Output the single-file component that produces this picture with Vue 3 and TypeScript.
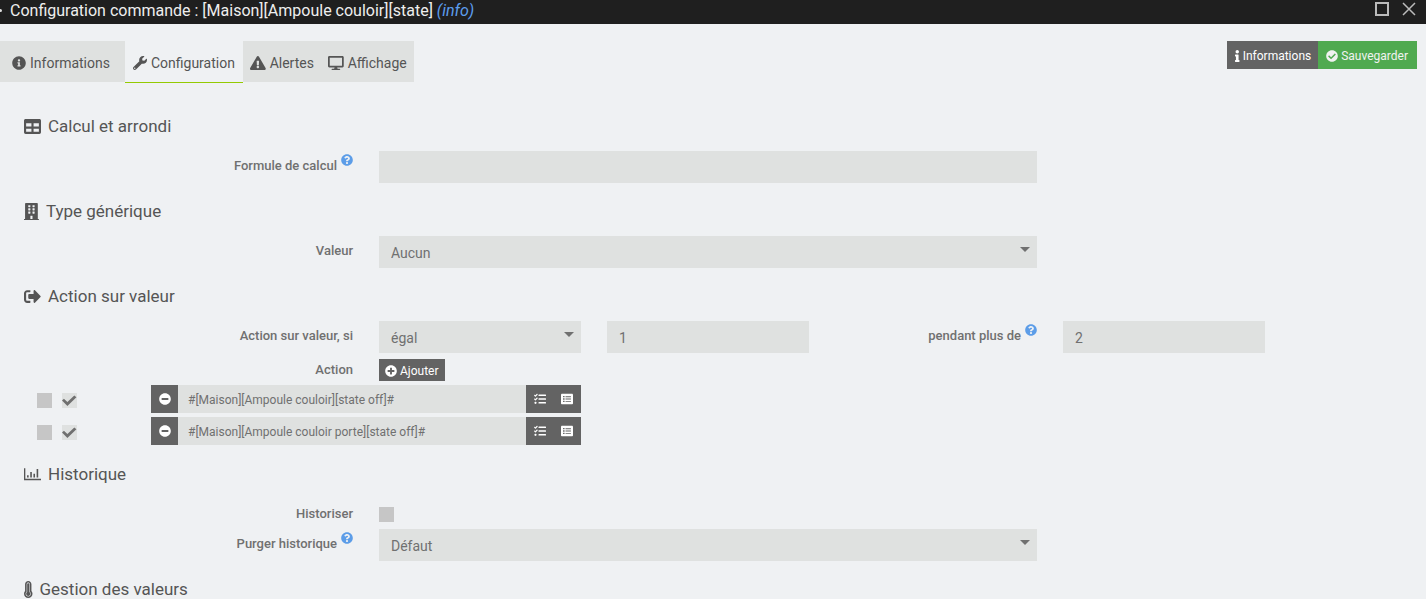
<script setup lang="ts">
import { ref } from 'vue'

interface Icon {
  w: number
  d: string
}

const icons: Record<string, Icon> = {
  info: {
    w: 512,
    d: 'M256 8C119 8 8 119 8 256s111 248 248 248 248-111 248-248S393 8 256 8zm0 110c23 0 42 19 42 42s-19 42-42 42-42-19-42-42 19-42 42-42zm56 254c0 7-5 12-12 12h-88c-7 0-12-5-12-12v-24c0-7 5-12 12-12h12v-64h-12c-7 0-12-5-12-12v-24c0-7 5-12 12-12h64c7 0 12 5 12 12v100h12c7 0 12 5 12 12z',
  },
  wrench: {
    w: 512,
    d: 'M507.7 109.1c-2.2-9-13.5-12.1-20.1-5.5l-74.4 74.4-67.9-11.3L334 98.9l74.4-74.4c6.6-6.6 3.4-17.9-5.7-20.2-47.4-11.7-99.6.9-136.6 37.9-39.6 39.6-50.5 97.1-34.1 147.2L18.7 402.8c-25 25-25 65.5 0 90.5s65.5 25 90.5 0l213.2-213.2c50.1 16.7 107.5 5.7 147.4-34.2 37.1-37.1 49.7-89.3 37.9-136.8zM64 472c-13.2 0-24-10.8-24-24s10.8-24 24-24 24 10.8 24 24-10.7 24-24 24z',
  },
  warning: {
    w: 576,
    d: 'M569.5 440C588 472 564.8 512 527.9 512H48.1c-36.9 0-60-40.1-41.6-72L246.4 24c18.5-32 64.7-32 83.2 0l239.9 416zM288 354c-25.4 0-46 20.6-46 46s20.6 46 46 46 46-20.6 46-46-20.6-46-46-46zm-43.7-165.3l7.4 136c.4 6.4 5.6 11.3 12 11.3h48.6c6.4 0 11.6-4.9 12-11.3l7.4-136c.4-6.9-5.1-12.7-12-12.7h-63.4c-6.9 0-12.4 5.8-12 12.7z',
  },
  desktop: {
    w: 576,
    d: 'M528 0H48C21.5 0 0 21.5 0 48v320c0 26.500 21.500 48 48 48h192l-16 48h-72c-13.300 0-24 10.700-24 24s10.700 24 24 24h272c13.300 0 24-10.700 24-24s-10.700-24-24-24h-72l-16-48h192c26.500 0 48-21.500 48-48V48c0-26.500-21.500-48-48-48zm-16 352H64V64h448v288z',
  },
  infoBare: {
    w: 192,
    d: 'M20 424.200h20V279.800H20c-11 0-20-9-20-20V212c0-11 9-20 20-20h112c11 0 20 9 20 20v212.200h20c11 0 20 9 20 20V492c0 11-9 20-20 20H20c-11 0-20-9-20-20v-47.800c0-11 9-20 20-20zM96 0C56.200 0 24 32.200 24 72s32.200 72 72 72 72-32.200 72-72S135.800 0 96 0z',
  },
  checkCircle: {
    w: 512,
    d: 'M504 256c0 137-111 248-248 248S8 393 8 256 119 8 256 8s248 111 248 248zM227.300 387.300l184-184c6.200-6.200 6.200-16.400 0-22.600l-22.600-22.600c-6.200-6.200-16.400-6.200-22.600 0L216 308.100l-70.100-70.100c-6.200-6.200-16.400-6.200-22.600 0l-22.600 22.600c-6.200 6.200-6.200 16.400 0 22.600l104 104c6.200 6.300 16.400 6.300 22.600.1z',
  },
  table: {
    w: 512,
    d: 'M464 32H48C21.500 32 0 53.500 0 80v352c0 26.500 21.500 48 48 48h416c26.500 0 48-21.500 48-48V80c0-26.500-21.500-48-48-48zM224 416H64v-96h160v96zm0-160H64v-96h160v96zm224 160H288v-96h160v96zm0-160H288v-96h160v96z',
  },
  building: {
    w: 448,
    d: 'M436 480h-20V24c0-13.300-10.700-24-24-24H56C42.700 0 32 10.700 32 24v456H12c-6.600 0-12 5.400-12 12v20h448v-20c0-6.600-5.400-12-12-12zM128 76c0-6.600 5.400-12 12-12h40c6.600 0 12 5.400 12 12v40c0 6.600-5.400 12-12 12h-40c-6.600 0-12-5.400-12-12V76zm0 96c0-6.600 5.400-12 12-12h40c6.600 0 12 5.400 12 12v40c0 6.600-5.400 12-12 12h-40c-6.600 0-12-5.400-12-12v-40zm52 148h-40c-6.600 0-12-5.400-12-12v-40c0-6.600 5.400-12 12-12h40c6.600 0 12 5.400 12 12v40c0 6.600-5.400 12-12 12zm76 160h-64v-84c0-6.600 5.400-12 12-12h40c6.600 0 12 5.400 12 12v84zm64-172c0 6.600-5.400 12-12 12h-40c-6.600 0-12-5.400-12-12v-40c0-6.600 5.400-12 12-12h40c6.600 0 12 5.400 12 12v40zm0-96c0 6.600-5.400 12-12 12h-40c-6.600 0-12-5.400-12-12v-40c0-6.600 5.400-12 12-12h40c6.600 0 12 5.400 12 12v40zm0-96c0 6.600-5.400 12-12 12h-40c-6.600 0-12-5.400-12-12V76c0-6.600 5.400-12 12-12h40c6.600 0 12 5.400 12 12v40z',
  },
  signOut: {
    w: 512,
    d: 'M497 273L329 441c-15 15-41 4.500-41-17v-96H152c-13.300 0-24-10.700-24-24v-96c0-13.300 10.700-24 24-24h136V88c0-21.400 25.900-32 41-17l168 168c9.300 9.400 9.300 24.600 0 34zM192 436v-40c0-6.600-5.400-12-12-12H96c-17.700 0-32-14.300-32-32V160c0-17.700 14.300-32 32-32h84c6.600 0 12-5.400 12-12V76c0-6.600-5.400-12-12-12H96c-53 0-96 43-96 96v192c0 53 43 96 96 96h84c6.600 0 12-5.400 12-12z',
  },
  chart: {
    w: 512,
    d: 'M0 64h40v320h472v44H0zM92 280h48v64h-48zM188 184h48v160h-48zM284 232h48v112h-48zM380 88h48v256h-48z',
  },
  thermometer: {
    w: 256,
    d: 'M224 96c0-53-43-96-96-96S32 43 32 96v203.300C12.300 321.500 0 350.700 0 383c0 70.700 57.300 129 128 129s128-57.300 128-128c0-32.500-12.300-62.300-32-84.700zm-96 368c-44.100 0-80-35.900-80-80 0-25.500 12.200-48.900 32-63.800V96c0-26.500 21.500-48 48-48s48 21.500 48 48v224.200c19.800 14.800 32 38.300 32 63.800 0 44.100-35.900 80-80 80zm64-80c0 35.300-28.700 64-64 64s-64-28.700-64-64c0-23.700 12.900-44.400 32-55.400V96c0-17.700 14.300-32 32-32s32 14.300 32 32v232.600c19.100 11 32 31.700 32 55.400z',
  },
  question: {
    w: 512,
    d: 'M504 256c0 137-111 248-248 248S8 393 8 256 119 8 256 8s248 111 248 248zM262.700 90c-54.500 0-89.300 23-116.500 63.800-3.500 5.300-2.400 12.400 2.700 16.300l34.700 26.300c5.200 3.900 12.600 3 16.700-2.100 17.900-22.700 30.100-35.800 57.300-35.800 20.400 0 45.700 13.100 45.700 33 0 15-12.400 22.700-32.500 34C247.100 238.500 216 254.900 216 296v4c0 6.600 5.400 12 12 12h56c6.600 0 12-5.400 12-12v-1.300c0-28.500 83.200-29.600 83.200-106.700 0-58-60.200-102-116.500-102zM256 338c-25.400 0-46 20.600-46 46s20.600 46 46 46 46-20.600 46-46-20.600-46-46-46z',
  },
  plus: {
    w: 512,
    d: 'M256 8C119 8 8 119 8 256s111 248 248 248 248-111 248-248S393 8 256 8zm144 276c0 6.600-5.400 12-12 12h-92v92c0 6.600-5.400 12-12 12h-56c-6.600 0-12-5.400-12-12v-92h-92c-6.600 0-12-5.400-12-12v-56c0-6.600 5.400-12 12-12h92v-92c0-6.600 5.400-12 12-12h56c6.600 0 12 5.400 12 12v92h92c6.600 0 12 5.400 12 12v56z',
  },
  minus: {
    w: 512,
    d: 'M256 8C119 8 8 119 8 256s111 248 248 248 248-111 248-248S393 8 256 8zM124 296c-6.600 0-12-5.400-12-12v-56c0-6.600 5.400-12 12-12h264c6.600 0 12 5.400 12 12v56c0 6.600-5.400 12-12 12H124z',
  },
  tasks: {
    w: 512,
    d: 'M139.600 35.500a12 12 0 0 0-17 0L58.900 98.800l-22.700-22.100a12 12 0 0 0-17 0L3.500 92.400a12 12 0 0 0 0 17l47.600 47.400a12.800 12.800 0 0 0 17.600 0l86.500-86.500a12 12 0 0 0 .1-17zm0 159.200a12 12 0 0 0-17 0l-63.700 63.700-22.700-22.100a12 12 0 0 0-17 0L3.500 252a12 12 0 0 0 0 17l47.600 47.400a12.800 12.800 0 0 0 17.600 0l86.500-86.600a12 12 0 0 0 .1-17zM64 368c-26.500 0-48.600 21.500-48.600 48s22.100 48 48.600 48a48 48 0 0 0 0-96zm432 16H208a16 16 0 0 0-16 16v32a16 16 0 0 0 16 16h288a16 16 0 0 0 16-16v-32a16 16 0 0 0-16-16zm0-320H208a16 16 0 0 0-16 16v32a16 16 0 0 0 16 16h288a16 16 0 0 0 16-16V80a16 16 0 0 0-16-16zm0 160H208a16 16 0 0 0-16 16v32a16 16 0 0 0 16 16h288a16 16 0 0 0 16-16v-32a16 16 0 0 0-16-16z',
  },
  list: {
    w: 512,
    d: 'M464 32H48C21.500 32 0 53.500 0 80v352c0 26.500 21.500 48 48 48h416c26.500 0 48-21.500 48-48V80c0-26.500-21.500-48-48-48zM88 128h64v56H88zM88 228h64v56H88zM88 328h64v56H88zM192 136h232v40H192zM192 236h232v40H192zM192 336h232v40H192z',
  },
}

const tabs = [
  { id: 'informations', label: 'Informations', icon: icons.info },
  { id: 'configuration', label: 'Configuration', icon: icons.wrench },
  { id: 'alertes', label: 'Alertes', icon: icons.warning },
  { id: 'affichage', label: 'Affichage', icon: icons.desktop },
]

const activeTab = ref('configuration')
const formula = ref('')
const genericType = ref('Aucun')
const operator = ref('égal')
const compareValue = ref('1')
const duration = ref('2')
const historize = ref(false)
const purge = ref('Défaut')
const actions = ref([
  { parallel: false, enabled: true, command: '#[Maison][Ampoule couloir][state off]#' },
  { parallel: false, enabled: true, command: '#[Maison][Ampoule couloir porte][state off]#' },
])

function addAction() {
  actions.value.push({ parallel: false, enabled: true, command: '' })
}
</script>

<template>
  <div class="dialog">
    <header class="titlebar">
      <span class="dot"></span>
      <h1>Configuration commande : [Maison][Ampoule couloir][state] <em>(info)</em></h1>
      <div class="window-buttons">
        <button type="button" aria-label="Agrandir">
          <svg width="14" height="14" viewBox="0 0 14 14"><rect x="1" y="1" width="12" height="12" /></svg>
        </button>
        <button type="button" aria-label="Fermer">
          <svg width="14" height="14" viewBox="0 0 14 14"><path d="M1 1l12 12M13 1L1 13" /></svg>
        </button>
      </div>
    </header>

    <div class="toolbar">
      <nav class="tabs" role="tablist">
        <button
          v-for="tab in tabs"
          :key="tab.id"
          type="button"
          role="tab"
          class="tab"
          :class="[tab.id, { active: activeTab === tab.id }]"
          :aria-selected="activeTab === tab.id"
          @click="activeTab = tab.id"
        >
          <svg class="icon" :viewBox="`0 0 ${tab.icon.w} 512`"><path :d="tab.icon.d" /></svg>
          <span>{{ tab.label }}</span>
        </button>
      </nav>
      <div class="main-buttons">
        <button type="button" class="btn">
          <svg class="icon" :viewBox="`0 0 ${icons.infoBare.w} 512`"><path :d="icons.infoBare.d" /></svg>
          Informations
        </button>
        <button type="button" class="btn success">
          <svg class="icon" viewBox="0 0 512 512"><path :d="icons.checkCircle.d" /></svg>
          Sauvegarder
        </button>
      </div>
    </div>

    <form class="form" @submit.prevent>
      <h2>
        <svg class="icon" viewBox="0 0 512 512"><path :d="icons.table.d" /></svg>
        <span>Calcul et arrondi</span>
      </h2>
      <div class="row">
        <div class="cell span3 label-cell">
          <label for="formula">Formule de calcul</label>
          <svg class="help" viewBox="0 0 512 512"><path :d="icons.question.d" /></svg>
        </div>
        <div class="cell span6"><input id="formula" v-model="formula" class="field" type="text" /></div>
      </div>

      <h2>
        <svg class="icon" viewBox="0 0 448 512"><path :d="icons.building.d" /></svg>
        <span>Type générique</span>
      </h2>
      <div class="row">
        <div class="cell span3 label-cell"><label for="generic">Valeur</label></div>
        <div class="cell span6 select">
          <select id="generic" v-model="genericType" class="field">
            <option>Aucun</option>
          </select>
        </div>
      </div>

      <h2>
        <svg class="icon" viewBox="0 0 512 512"><path :d="icons.signOut.d" /></svg>
        <span>Action sur valeur</span>
      </h2>
      <div class="row">
        <div class="cell span3 label-cell"><label for="operator">Action sur valeur, si</label></div>
        <div class="cell span2 select">
          <select id="operator" v-model="operator" class="field">
            <option>égal</option>
            <option>différent</option>
          </select>
        </div>
        <div class="cell span2">
          <input v-model="compareValue" class="field" type="text" aria-label="Valeur de comparaison" />
        </div>
        <div class="cell span2 label-cell">
          <label for="duration">pendant plus de</label>
          <svg class="help" viewBox="0 0 512 512"><path :d="icons.question.d" /></svg>
        </div>
        <div class="cell span2"><input id="duration" v-model="duration" class="field" type="text" /></div>
      </div>
      <div class="row">
        <div class="cell span3 label-cell"><label for="add-action">Action</label></div>
        <div class="cell span2 button-cell">
          <button id="add-action" type="button" class="btn small" @click="addAction">
            <svg class="icon" viewBox="0 0 512 512"><path :d="icons.plus.d" /></svg>
            Ajouter
          </button>
        </div>
      </div>
      <div class="actions">
        <div v-for="(action, index) in actions" :key="index" class="row">
          <div class="cell checks">
            <input v-model="action.parallel" type="checkbox" class="check" aria-label="Exécuter en parallèle" />
            <input v-model="action.enabled" type="checkbox" class="check" aria-label="Activer l'action" />
          </div>
          <div class="cell span4 group">
            <button type="button" class="btn square" aria-label="Supprimer" @click="actions.splice(index, 1)">
              <svg class="icon" viewBox="0 0 512 512"><path :d="icons.minus.d" /></svg>
            </button>
            <input v-model="action.command" class="field compact" type="text" aria-label="Commande" />
            <button type="button" class="btn square" aria-label="Sélectionner une action">
              <svg class="icon" viewBox="0 0 512 512"><path :d="icons.tasks.d" /></svg>
            </button>
            <button type="button" class="btn square wide" aria-label="Sélectionner une commande">
              <svg class="icon" viewBox="0 0 512 512"><path :d="icons.list.d" /></svg>
            </button>
          </div>
        </div>
      </div>

      <h2>
        <svg class="icon" viewBox="0 0 512 512"><path :d="icons.chart.d" /></svg>
        <span>Historique</span>
      </h2>
      <div class="row">
        <div class="cell span3 label-cell"><label for="historize">Historiser</label></div>
        <div class="cell span6 checks"><input id="historize" v-model="historize" type="checkbox" class="check" /></div>
      </div>
      <div class="row">
        <div class="cell span3 label-cell">
          <label for="purge">Purger historique</label>
          <svg class="help" viewBox="0 0 512 512"><path :d="icons.question.d" /></svg>
        </div>
        <div class="cell span6 select">
          <select id="purge" v-model="purge" class="field">
            <option>Défaut</option>
          </select>
        </div>
      </div>

      <h2>
        <svg class="icon" viewBox="0 0 256 512"><path :d="icons.thermometer.d" /></svg>
        <span>Gestion des valeurs</span>
      </h2>
    </form>
  </div>
</template>

<style>
html,
body {
  background: #eff1f3;
}

body {
  height: 100vh;
  overflow: hidden;
}
</style>

<style scoped>
.dialog,
.dialog * {
  box-sizing: border-box;
}

.dialog {
  height: 100vh;
  overflow: hidden;
  background: #eff1f3;
  color: #555;
  font-family: Roboto, "Liberation Sans", sans-serif;
  font-size: 14px;
}

button,
input,
select {
  margin: 0;
  border: 0;
  border-radius: 0;
  font-family: inherit;
}

button {
  cursor: pointer;
}

.icon {
  height: 1em;
  flex: none;
  fill: currentColor;
}

.titlebar {
  display: flex;
  align-items: center;
  height: 24px;
  padding-right: 10px;
  background: #1f1f1f;
  color: #eee;
}

.dot {
  width: 2px;
  height: 3px;
  margin-bottom: 4px;
  border-radius: 0 2px 2px 0;
  background: #ddd;
}

.titlebar h1 {
  flex: 1;
  margin: 0 0 2px 8px;
  font-size: 16px;
  font-weight: 400;
  line-height: 20px;
}

.titlebar em {
  color: #5c9ded;
}

.window-buttons {
  display: flex;
  gap: 13px;
  padding-bottom: 6px;
}

.window-buttons button {
  display: flex;
  padding: 0;
  background: none;
}

.window-buttons svg {
  fill: none;
  stroke: #bbb;
  stroke-width: 2;
}

.window-buttons path {
  stroke-width: 1.5;
}

.toolbar {
  display: flex;
  justify-content: space-between;
  align-items: flex-start;
  padding: 17px 9px 0 0;
}

.tabs {
  display: flex;
  height: 42px;
}

.tab {
  display: flex;
  align-items: center;
  gap: 4px;
  height: 41px;
  padding: 3px 7px 0;
  background: #dfe1e0;
  color: #555;
  font-size: 14px;
}

.tab.informations {
  padding-left: 12px;
  padding-right: 15px;
}

.tab.active {
  height: 42px;
  padding-left: 8px;
  padding-right: 8px;
  background: #eff1f3;
  border-bottom: 1px solid #94ca02;
}

.main-buttons {
  display: flex;
}

.btn {
  display: flex;
  align-items: center;
  justify-content: center;
  gap: 3px;
  height: 28px;
  padding: 2px 7px 0 8px;
  background: #636363;
  color: #fff;
  font-size: 12px;
}

.btn.success {
  padding-right: 9px;
  background: #50aa50;
  color: #f0f2f0;
}

.btn.small {
  height: 22px;
  padding: 1px 6px 0;
}

.form {
  padding: 31px 34px 0 24px;
}

h2 {
  display: flex;
  align-items: center;
  gap: 7px;
  margin: 16px 0 13px;
  font-size: 17px;
  font-weight: 400;
  line-height: 24px;
}

h2:first-child {
  margin-top: 0;
}

.row {
  display: grid;
  grid-template-columns: repeat(12, 1fr);
}

.row + .row,
.row + .actions {
  margin-top: 2px;
}

.actions {
  padding-bottom: 1px;
}

.actions .row + .row {
  margin-top: 4px;
}

.cell {
  min-width: 0;
  padding: 0 13px;
}

.span2 {
  grid-column: span 2;
}

.span3 {
  grid-column: span 3;
}

.span4 {
  grid-column: span 4;
}

.span6 {
  grid-column: span 6;
}

.label-cell {
  display: flex;
  justify-content: flex-end;
  gap: 4px;
  height: 28px;
  color: #707070;
  font-size: 13px;
  font-weight: 500;
  line-height: 30px;
}

.help {
  width: 12px;
  height: 12px;
  margin-top: 3px;
  fill: #5c9de8;
}

.field {
  display: block;
  width: 100%;
  height: 32px;
  padding: 2px 12px 0;
  outline: 0;
  appearance: none;
  background: #dfe1e0;
  color: #707070;
  font-size: 14px;
}

.field.compact {
  flex: 1;
  min-width: 0;
  height: 28px;
  padding: 2px 10px 0;
  font-size: 12px;
}

.select {
  position: relative;
}

.select::after {
  content: "";
  position: absolute;
  top: 11px;
  right: 20px;
  border: 5px solid transparent;
  border-top-color: #707070;
  border-bottom: 0;
  pointer-events: none;
}

.button-cell {
  display: flex;
  padding-top: 4px;
}

.checks {
  display: flex;
  gap: 10px;
  height: 28px;
  padding-top: 8px;
}

.check {
  display: block;
  width: 15px;
  height: 15px;
  appearance: none;
  background: #c6c6c6;
}

.check:checked {
  background: #dfe1e0;
}

.check:checked::after {
  content: "";
  display: block;
  width: 15px;
  height: 15px;
  background: #707070;
  clip-path: polygon(0 50%, 13% 38%, 36% 60%, 82% 16%, 96% 29%, 36% 86%);
}

.group {
  display: flex;
}

.btn.square {
  width: 27px;
  flex: none;
  padding: 0;
}

.btn.square.wide {
  width: 28px;
}
</style>
